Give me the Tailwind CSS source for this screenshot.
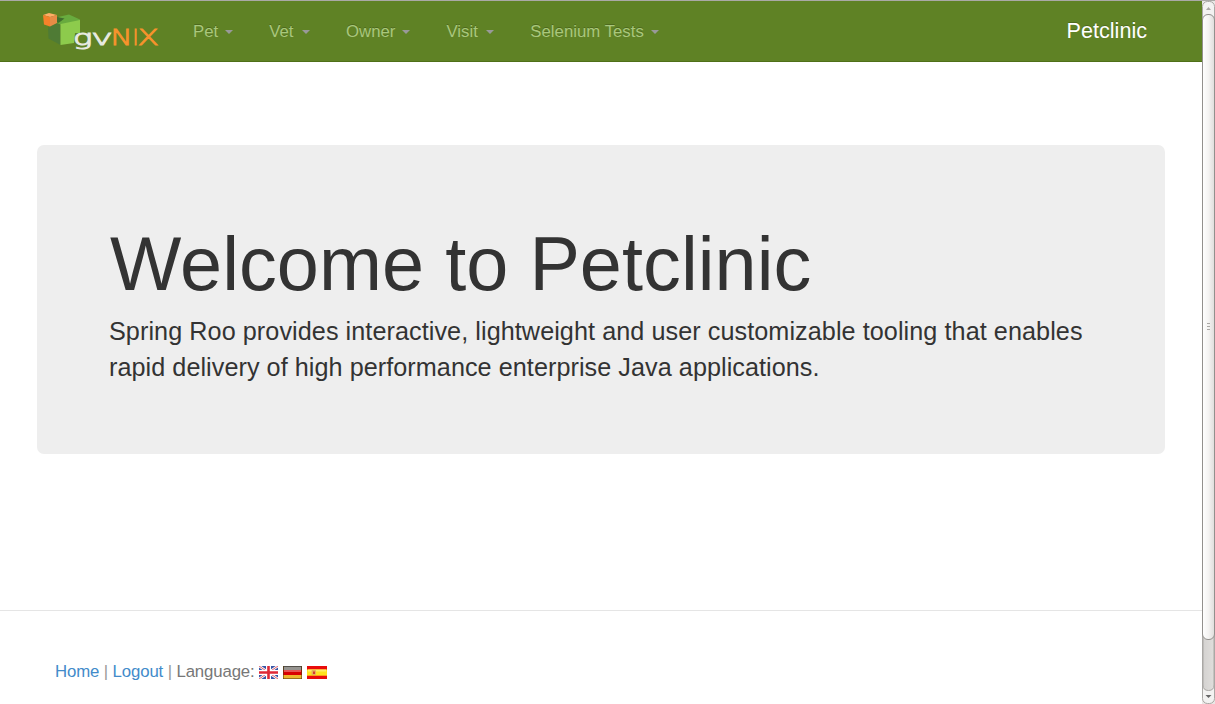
<!DOCTYPE html>
<html lang="en">
<head>
<meta charset="utf-8">
<title>Petclinic</title>
<script src="https://cdn.jsdelivr.net/npm/@tailwindcss/browser@4"></script>
</head>
<body class="flex h-screen overflow-hidden bg-white font-['Liberation_Sans',Arial,sans-serif] text-[16.8px] leading-6 text-[#333]">
<div class="flex min-w-0 flex-1 flex-col">
  <nav class="flex h-[62px] shrink-0 items-center border-t border-b border-t-[#aaa9a6] border-b-[#4f7018] bg-[#5f8225] text-[#a9c77c] [text-shadow:0_-1px_0_rgba(0,0,0,0.2)]">
    <svg class="ml-[42px] h-[40px] w-[118px] shrink-0 [text-shadow:none]" viewBox="42 11 118 40">
      <path d="M48 27.500 57 23 60.500 24V45L48.500 38.500z" fill="#4f7b35"/>
      <path d="M57 23 61 19 58 17 69 14.500 80 19.500 80 21 60.500 24.500z" fill="#68ab3e"/>
      <path d="M57 17 64.500 18.500 58.500 23 57 22z" fill="#406e2d"/>
      <path d="M60.500 24 80 20V33H75L74 43 60.500 45z" fill="#8dcb4c"/>
      <path d="M43 15 49 13 57 15 50 17z" fill="#ffad66"/>
      <path d="M43 15 50 17V26.500L44 24.500z" fill="#f5822a"/>
      <path d="M50 17 57 15V23L50 26.500z" fill="#e78c46"/>
      <g font-family="DejaVu Sans" font-weight="200" font-size="20.500">
        <text x="73" y="45" fill="#e6e9e0" stroke="#e6e9e0" stroke-width="1" textLength="19.500" lengthAdjust="spacingAndGlyphs">g</text>
        <text x="91" y="45" fill="#e6e9e0" stroke="#e6e9e0" stroke-width=".8" textLength="22" lengthAdjust="spacingAndGlyphs">v</text>
        <g fill="#f7932d" stroke="#f7932d" stroke-width=".8">
          <text x="110.500" y="45" textLength="22" lengthAdjust="spacingAndGlyphs">N</text>
          <text x="132.500" y="45" textLength="6" lengthAdjust="spacingAndGlyphs">I</text>
          <text x="137.500" y="45" textLength="21.500" lengthAdjust="spacingAndGlyphs">X</text>
        </g>
      </g>
    </svg>
    <ul class="mt-[2px] ml-[33px] flex gap-9">
      <li class="flex items-center gap-[7px]">Pet<svg class="h-1 w-2" viewBox="0 0 8 4"><path d="M0 0h8L4 4z" fill="#999"/></svg></li>
      <li class="flex items-center gap-[8.500px]">Vet<svg class="h-1 w-2" viewBox="0 0 8 4"><path d="M0 0h8L4 4z" fill="#999"/></svg></li>
      <li class="flex items-center gap-[7px]">Owner<svg class="h-1 w-2" viewBox="0 0 8 4"><path d="M0 0h8L4 4z" fill="#999"/></svg></li>
      <li class="flex items-center gap-[8.500px]">Visit<svg class="h-1 w-2" viewBox="0 0 8 4"><path d="M0 0h8L4 4z" fill="#999"/></svg></li>
      <li class="flex items-center gap-[7px]">Selenium Tests<svg class="h-1 w-2" viewBox="0 0 8 4"><path d="M0 0h8L4 4z" fill="#999"/></svg></li>
    </ul>
    <span class="mr-[55px] ml-auto text-[21.6px] text-white">Petclinic</span>
  </nav>
  <main class="mx-[37px] mt-[83px] h-[309px] shrink-0 rounded-[7px] bg-[#eee] px-[72px] pt-[81px]">
    <h1 class="ml-px text-[75.6px] leading-[76px] tracking-[0.06px] whitespace-nowrap">Welcome to Petclinic</h1>
    <p class="mt-[11px] text-[25.2px] leading-9 whitespace-nowrap"><span class="tracking-[0.07px]">Spring Roo provides interactive, lightweight and user customizable tooling that enables</span><br><span class="tracking-[0.055px]">rapid delivery of high performance enterprise Java applications.</span></p>
  </main>
  <footer class="mt-[156px] flex flex-1 items-start border-t border-[#e5e5e5] pt-[49px] pl-[55px] text-[#777]">
    <p class="tracking-[-0.13px] whitespace-nowrap"><a class="text-[#428bca]">Home</a> <span class="text-[#999]">|</span> <a class="text-[#428bca]">Logout</a> <span class="text-[#999]">|</span> Language:</p>
    <div class="mt-[6px] ml-1 flex gap-[5px]">
      <svg class="h-[13px] w-[19px]" viewBox="0 0 19 13">
        <rect width="19" height="13" fill="#3855a5"/>
        <path d="M0 0 19 13M19 0 0 13" stroke="#fff" stroke-width="2.6"/>
        <path d="M0 0 19 13M19 0 0 13" stroke="#e0606b" stroke-width="1"/>
        <path d="M9.5 0V13M0 6.5H19" stroke="#fff" stroke-width="5"/>
        <path d="M9.5 0V13M0 6.5H19" stroke="#df2836" stroke-width="2.6"/>
      </svg>
      <svg class="h-[13px] w-[19px]" viewBox="0 0 19 13">
        <rect width="19" height="5" fill="#53504a"/><rect y="4" width="19" height="5" fill="#d90000"/><rect y="9" width="19" height="4" fill="#edb52d"/>
        <rect x="1" y="1" width="17" height="3" fill="#969490"/><rect x="1" y="4" width="17" height="2" fill="#e65452"/>
        <path d="M.5 0V13M18.5 0V13M0 12.5H19" stroke="#55390a" stroke-opacity=".55"/>
      </svg>
      <svg class="h-[13px] w-5" viewBox="0 0 20 13">
        <rect width="20" height="13" fill="#e90b0b"/><rect y="3.5" width="20" height="6.2" fill="#ffe11d"/><rect x="1" y="3.5" width="18" height="2" fill="#ffed68"/>
        <rect x="4.5" y="4" width="4.5" height="5" rx="1" fill="#e5b05a"/><rect x="6" y="5.5" width="2" height="2.5" fill="#d33b31"/>
      </svg>
    </div>
  </footer>
</div>
<div class="w-[13px] shrink-0">
  <svg class="block h-[704px] w-[13px]" viewBox="0 0 13 704">
    <defs>
      <linearGradient id="track"><stop offset="0" stop-color="#d4d2d0"/><stop offset="1" stop-color="#e0dedc"/></linearGradient>
      <linearGradient id="thumb"><stop offset="0" stop-color="#fff"/><stop offset=".5" stop-color="#f4f3f2"/><stop offset="1" stop-color="#dfdddb"/></linearGradient>
    </defs>
    <rect width="13" height="704" fill="#e9e7e5"/>
    <rect x=".5" y="1.5" width="12" height="702" rx="5" fill="#f3f2f1" stroke="#aaa8a5"/>
    <path d="M.5 20V640M12.500 20V640" stroke="#aaa8a5"/>
    <path d="M1 630H12V685Q12 690.500 6.500 690.500T1 685z" fill="url(#track)" stroke="#aaa8a5"/>
    <rect x=".5" y="14.5" width="12" height="625" rx="5.5" fill="url(#thumb)" stroke="#92908d"/>
    <path d="M0 .5H13" stroke="#aaa9a6"/>
    <path d="M4 10 6.5 7 9 10z" fill="#aaa8a5"/>
    <path d="M3.500 695 6.5 698 9.500 695z" fill="#666"/>
    <path d="M5 323.5H8M5 326.5H8M5 329.5H8" stroke="#aaa8a5"/>
  </svg>
</div>
</body>
</html>
